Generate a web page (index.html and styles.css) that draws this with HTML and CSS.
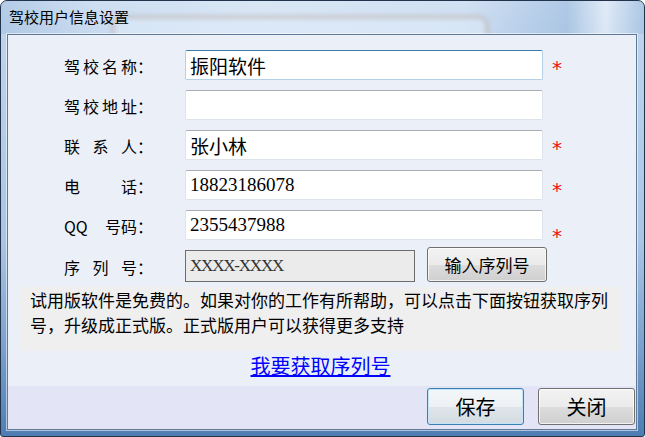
FILE: index.html
```html
<!DOCTYPE html>
<html lang="zh-CN">
<head>
    <meta charset="UTF-8">
    <title>驾校用户信息设置</title>
    <link rel="stylesheet" href="styles.css">
</head>
<body>
    <div class="window">
        <div class="titlebar"><span class="caption">驾校用户信息设置</span></div>
        <div class="client">
            <div class="form">
                <div class="row">
                    <label class="label"><span class="name"><span>驾</span><span>校</span><span>名</span><span>称</span></span>：</label>
                    <input class="field focus" type="text" value="振阳软件">
                    <span class="req">*</span>
                </div>
                <div class="row">
                    <label class="label"><span class="name"><span>驾</span><span>校</span><span>地</span><span>址</span></span>：</label>
                    <input class="field" type="text" value="">
                </div>
                <div class="row">
                    <label class="label"><span class="name"><span>联</span><span>系</span><span>人</span></span>：</label>
                    <input class="field" type="text" value="张小林">
                    <span class="req">*</span>
                </div>
                <div class="row">
                    <label class="label"><span class="name"><span>电</span><span>话</span></span>：</label>
                    <input class="field" type="text" value="18823186078">
                    <span class="req low">*</span>
                </div>
                <div class="row">
                    <label class="label"><span class="name"><span>QQ</span><span>号码</span></span>：</label>
                    <input class="field" type="text" value="2355437988">
                    <span class="req lower">*</span>
                </div>
                <div class="row serial-row">
                    <label class="label"><span class="name"><span>序</span><span>列</span><span>号</span></span>：</label>
                    <input class="serial" type="text" value="XXXX-XXXX" readonly>
                    <button class="btn small">输入序列号</button>
                </div>
            </div>

            <p class="note">试用版软件是免费的。如果对你的工作有所帮助，可以点击下面按钮获取序列号，升级成正式版。正式版用户可以获得更多支持</p>
            <div class="linkline"><a href="#">我要获取序列号</a></div>

            <div class="footer">
                <button class="btn big default">保存</button>
                <button class="btn big">关闭</button>
            </div>
        </div>
    </div>
</body>
</html>
```

FILE: styles.css
```css
* {
    margin: 0;
    padding: 0;
    box-sizing: border-box;
}
body {
    width: 645px;
    height: 437px;
    overflow: hidden;
    background: #fff;
    font-family: "Noto Sans CJK SC", sans-serif;
}
.window {
    width: 645px;
    height: 437px;
    display: flex;
    flex-direction: column;
    border: 1px solid #22344c;
    border-radius: 7px 7px 3px 3px;
    padding: 0 7px 6px 6px;
    background: linear-gradient(to bottom, #c6daf0 0, #bdd3ec 40px, #a9c5e4 55%, #7aa0cc 80%, #4f7db3 100%);
    overflow: hidden;
}
.titlebar {
    position: relative;
    height: 33px;
    margin: 0 -7px 0 -6px;
    padding-left: 8px;
    display: flex;
    align-items: center;
    background: linear-gradient(90deg, rgba(150,180,215,.35) 0, rgba(255,255,255,.15) 15%, rgba(255,255,255,.35) 40%, rgba(255,255,255,.2) 72%, rgba(110,150,200,.25) 88%, rgba(255,255,255,.45) 94%, rgba(120,160,205,.3) 100%);
}
/* blurred window behind the glass */
.titlebar::before {
    content: "";
    position: absolute;
    left: 110px;
    top: 14px;
    width: 370px;
    height: 40px;
    border: 4px solid rgba(160, 130, 110, .3);
    border-radius: 10px;
    background: rgba(225, 238, 252, .5);
    filter: blur(2px);
}
.caption {
    position: relative;
    font-size: 15px;
    color: #000;
    padding-bottom: 3px;
}
.client {
    flex: 1;
    display: flex;
    flex-direction: column;
    border: 1px solid #5f7997;
    box-shadow: 0 0 0 1px rgba(255,255,255,.55);
    background: #ebf0f8;
    position: relative;
}
.form {
    display: flex;
    flex-direction: column;
    gap: 10px;
    padding: 15px 0 0 56px;
}
.row {
    display: flex;
    align-items: center;
    height: 30px;
}
.label {
    width: 121px;
    display: flex;
    font-size: 16px;
    color: #000;
    padding-top: 1px;
}
.name {
    width: 73px;
    display: flex;
    justify-content: space-between;
}
.field {
    width: 358px;
    height: 30px;
    border: 1px solid #dde3ea;
    border-top-color: #abadb3;
    border-radius: 2px;
    background: #fff;
    padding: 0 4px;
    font: 19px "Liberation Serif", "Noto Sans CJK SC", serif;
    color: #000;
    outline: none;
}
.field.focus {
    border-color: #b5cfe7;
    border-top-color: #3d7bad;
}
.req {
    color: #f01010;
    font: 20px "DejaVu Sans", sans-serif;
    margin-left: 9px;
    padding-top: 6px;
}
.req.low {
    padding-top: 10px;
}
.req.lower {
    padding-top: 22px;
}
.serial-row {
    height: 35px;
    align-items: flex-end;
    margin-top: -3px;
}
.serial {
    width: 230px;
    height: 32px;
    border: 1px solid #6d6d6d;
    background: #ebebeb;
    padding: 0 4px;
    font: 17px "Liberation Serif", serif;
    letter-spacing: -1.2px;
    color: #333;
    outline: none;
}
.serial-row .label {
    align-self: center;
    padding-top: 4px;
}
.btn {
    border: 1px solid #707070;
    border-radius: 3px;
    background: linear-gradient(to bottom, #f2f2f2 0%, #ebebeb 50%, #dddddd 51%, #cfcfcf 100%);
    box-shadow: inset 0 0 0 1px rgba(255,255,255,.75);
    font-family: "Noto Sans CJK SC", sans-serif;
    color: #000;
}
.small {
    width: 120px;
    height: 35px;
    margin-left: 12px;
    font-size: 17px;
}
.note {
    margin: 5px 15px 0 12px;
    padding: 0 4px 14px 10px;
    background: #efeff0;
    font-size: 17px;
    line-height: 25px;
    color: #000;
}
.linkline {
    margin: 3px 15px 0 12px;
    text-align: center;
    line-height: 24px;
}
.linkline a {
    font-size: 20px;
    color: #0000ff;
    text-decoration: underline;
}
.footer {
    margin-top: auto;
    height: 43px;
    padding: 2px 1px 0 0;
    display: flex;
    justify-content: flex-end;
    align-items: flex-start;
    gap: 14px;
    background: #e3e5f6;
}
.big {
    width: 97px;
    height: 37px;
    font-size: 20px;
}
.default {
    border-color: #3c7fb1;
    box-shadow: inset 0 0 0 1px #c4e5f8;
    background: linear-gradient(to bottom, #f4f7f9 0%, #edf1f4 50%, #dfe5ea 51%, #d3dbe2 100%);
}
```
